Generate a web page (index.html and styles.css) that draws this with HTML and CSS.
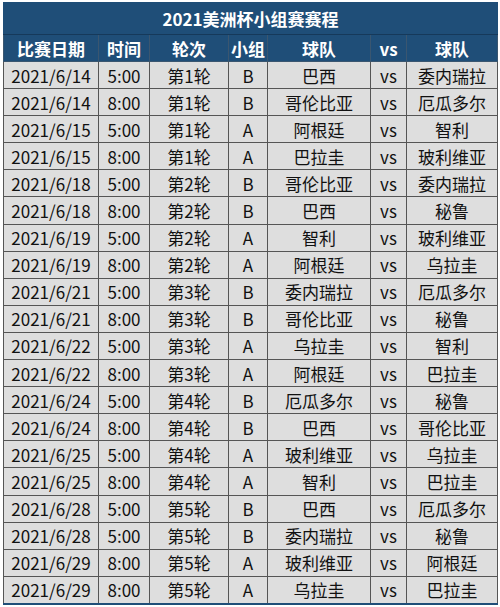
FILE: index.html
```html
<!DOCTYPE html>
<html lang="zh">
<head>
<meta charset="utf-8">
<link rel="stylesheet" href="styles.css">
</head>
<body>
<table class="sched">
<colgroup>
<col class="c-date"><col class="c-time"><col class="c-round"><col class="c-group"><col class="c-team"><col class="c-vs"><col class="c-team2">
</colgroup>
<thead>
<tr class="title"><th colspan="7">2021美洲杯小组赛赛程</th></tr>
<tr class="head"><th>比赛日期</th><th>时间</th><th>轮次</th><th>小组</th><th>球队</th><th>vs</th><th>球队</th></tr>
</thead>
<tbody>
<tr><td>2021/6/14</td><td>5:00</td><td>第1轮</td><td>B</td><td>巴西</td><td>vs</td><td>委内瑞拉</td></tr>
<tr><td>2021/6/14</td><td>8:00</td><td>第1轮</td><td>B</td><td>哥伦比亚</td><td>vs</td><td>厄瓜多尔</td></tr>
<tr><td>2021/6/15</td><td>5:00</td><td>第1轮</td><td>A</td><td>阿根廷</td><td>vs</td><td>智利</td></tr>
<tr><td>2021/6/15</td><td>8:00</td><td>第1轮</td><td>A</td><td>巴拉圭</td><td>vs</td><td>玻利维亚</td></tr>
<tr><td>2021/6/18</td><td>5:00</td><td>第2轮</td><td>B</td><td>哥伦比亚</td><td>vs</td><td>委内瑞拉</td></tr>
<tr><td>2021/6/18</td><td>8:00</td><td>第2轮</td><td>B</td><td>巴西</td><td>vs</td><td>秘鲁</td></tr>
<tr><td>2021/6/19</td><td>5:00</td><td>第2轮</td><td>A</td><td>智利</td><td>vs</td><td>玻利维亚</td></tr>
<tr><td>2021/6/19</td><td>8:00</td><td>第2轮</td><td>A</td><td>阿根廷</td><td>vs</td><td>乌拉圭</td></tr>
<tr><td>2021/6/21</td><td>5:00</td><td>第3轮</td><td>B</td><td>委内瑞拉</td><td>vs</td><td>厄瓜多尔</td></tr>
<tr><td>2021/6/21</td><td>8:00</td><td>第3轮</td><td>B</td><td>哥伦比亚</td><td>vs</td><td>秘鲁</td></tr>
<tr><td>2021/6/22</td><td>5:00</td><td>第3轮</td><td>A</td><td>乌拉圭</td><td>vs</td><td>智利</td></tr>
<tr><td>2021/6/22</td><td>8:00</td><td>第3轮</td><td>A</td><td>阿根廷</td><td>vs</td><td>巴拉圭</td></tr>
<tr><td>2021/6/24</td><td>5:00</td><td>第4轮</td><td>B</td><td>厄瓜多尔</td><td>vs</td><td>秘鲁</td></tr>
<tr><td>2021/6/24</td><td>8:00</td><td>第4轮</td><td>B</td><td>巴西</td><td>vs</td><td>哥伦比亚</td></tr>
<tr><td>2021/6/25</td><td>5:00</td><td>第4轮</td><td>A</td><td>玻利维亚</td><td>vs</td><td>乌拉圭</td></tr>
<tr><td>2021/6/25</td><td>8:00</td><td>第4轮</td><td>A</td><td>智利</td><td>vs</td><td>巴拉圭</td></tr>
<tr><td>2021/6/28</td><td>5:00</td><td>第5轮</td><td>B</td><td>巴西</td><td>vs</td><td>厄瓜多尔</td></tr>
<tr><td>2021/6/28</td><td>5:00</td><td>第5轮</td><td>B</td><td>委内瑞拉</td><td>vs</td><td>秘鲁</td></tr>
<tr><td>2021/6/29</td><td>8:00</td><td>第5轮</td><td>A</td><td>玻利维亚</td><td>vs</td><td>阿根廷</td></tr>
<tr><td>2021/6/29</td><td>8:00</td><td>第5轮</td><td>A</td><td>乌拉圭</td><td>vs</td><td>巴拉圭</td></tr>
</tbody>
</table>
</body>
</html>
```
FILE: styles.css
```css
html, body {
  margin: 0;
  padding: 0;
  background: #ffffff;
}
body {
  padding: 2px 0 0 3px;
  font-family: "Noto Sans CJK SC", "Noto Sans", sans-serif;
}
.sched {
  width: 494px;
  table-layout: fixed;
  border-collapse: collapse;
  border: 1px solid #2b2b2b;
  border-bottom: 2px solid #1f4e78;
}
.c-date { width: 95px; }
.c-time { width: 51px; }
.c-round { width: 79px; }
.c-group { width: 39px; }
.c-team { width: 103px; }
.c-vs { width: 36px; }
.c-team2 { width: 91px; }
.sched th, .sched td {
  padding: 0;
  text-align: center;
  white-space: nowrap;
  overflow: hidden;
  line-height: 1;
}
.title th {
  height: 31px;
  background: #1f4e78;
  color: #ffffff;
  font-size: 17px;
  font-weight: bold;
  border: 1px solid #1f4e78;
  border-bottom: 1px solid #16395a;
}
.head th {
  height: 26px;
  background: #1f4e78;
  color: #ffffff;
  font-size: 17px;
  font-weight: bold;
  border: 1px solid #3a5670;
}
.sched td {
  height: 26.1px;
  background: #dedede;
  color: #111111;
  font-size: 17px;
  border: 1px solid #555555;
}
```
